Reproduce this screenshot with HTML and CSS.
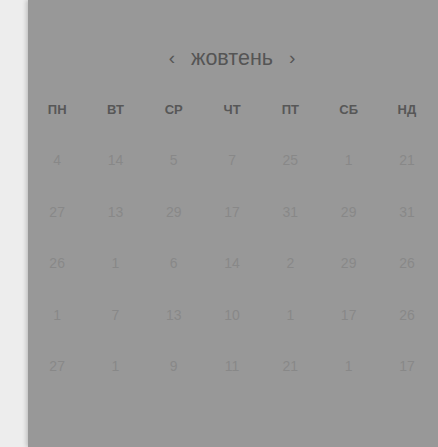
FILE: index.html
```html
<!DOCTYPE html>
<html lang="uk">
<head>
<meta charset="utf-8">
<link rel="stylesheet" href="styles.css">
</head>
<body>
<div class="card">
  <div class="month">
    <span class="nav">‹</span>
    <span class="title">жовтень</span>
    <span class="nav">›</span>
  </div>
  <div class="grid">
    <div class="wd">пн</div><div class="wd">вт</div><div class="wd">ср</div><div class="wd">чт</div><div class="wd">пт</div><div class="wd">сб</div><div class="wd">нд</div>
    <div class="d">4</div><div class="d">14</div><div class="d">5</div><div class="d">7</div><div class="d">25</div><div class="d">1</div><div class="d">21</div>
    <div class="d">27</div><div class="d">13</div><div class="d">29</div><div class="d">17</div><div class="d">31</div><div class="d">29</div><div class="d">31</div>
    <div class="d">26</div><div class="d">1</div><div class="d">6</div><div class="d">14</div><div class="d">2</div><div class="d">29</div><div class="d">26</div>
    <div class="d">1</div><div class="d">7</div><div class="d">13</div><div class="d">10</div><div class="d">1</div><div class="d">17</div><div class="d">26</div>
    <div class="d">27</div><div class="d">1</div><div class="d">9</div><div class="d">11</div><div class="d">21</div><div class="d">1</div><div class="d">17</div>
  </div>
</div>
</body>
</html>
```
FILE: styles.css
```css
html, body {
  margin: 0;
  padding: 0;
  background: #ededed;
  height: 100%;
  overflow: hidden;
}
body {
  font-family: "Liberation Sans", Arial, sans-serif;
}
.card {
  margin-left: 28px;
  height: 447px;
  background: #989898;
  box-shadow: -2px 0 4px rgba(0, 0, 0, 0.18);
}
.month {
  display: flex;
  justify-content: center;
  align-items: center;
  gap: 16px;
  padding-top: 46px;
  height: 24px;
  padding-right: 2px;
}
.title {
  font-size: 21.5px;
  line-height: 24px;
  color: #555;
}
.nav {
  font-size: 19px;
  line-height: 24px;
  color: #555;
  margin-top: -1px;
}
.grid {
  display: grid;
  grid-template-columns: repeat(7, 58.3px);
  grid-template-rows: 50px;
  grid-auto-rows: 51.5px;
  margin-top: 28px;
  text-align: center;
}
.wd {
  font-size: 13px;
  font-weight: bold;
  text-transform: uppercase;
  color: #575757;
  line-height: 24px;
  height: 24px;
}
.d {
  font-size: 14px;
  color: #888;
  line-height: 24px;
}
```
